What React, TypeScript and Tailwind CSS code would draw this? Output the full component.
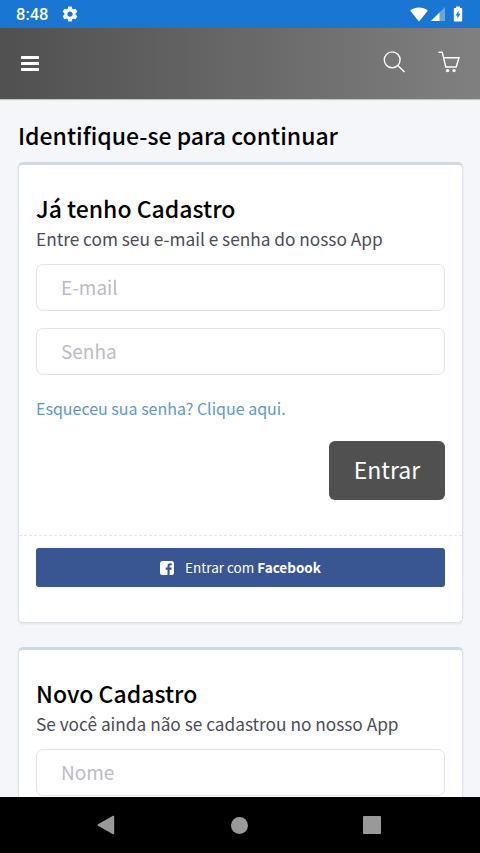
import React from 'react';

interface FieldProps {
  label: string;
  type?: string;
}

function Field({ label, type = 'text' }: FieldProps) {
  return (
    <input
      type={type}
      placeholder={label}
      className="block h-[47px] w-full rounded-[7px] border border-[#e2e3e8] bg-white px-[24px] pb-[3px] text-[19px] leading-[30px] text-[#4a4a58] placeholder:text-[#bbbcc6]"
    />
  );
}

interface PanelProps {
  title: string;
  description: string;
  children: React.ReactNode;
}

function Panel({ title, description, children }: PanelProps) {
  return (
    <section className="rounded-[5px] border border-t-[3px] border-[#dbe2ec] border-t-[#d0dae3] bg-white shadow-[0_1px_2px_rgba(190,200,215,0.4)]">
      <div className="px-[17px] pt-[27px]">
        <h2 className="mb-[1px] text-[23px] leading-[32px] font-medium text-black">{title}</h2>
        <p className="h-[39px] text-[17.25px] leading-[28px] whitespace-nowrap text-[#4b4b58]">{description}</p>
      </div>
      {children}
    </section>
  );
}

function StatusBar() {
  return (
    <div className="flex h-[28px] shrink-0 items-center bg-[#1976d2] pr-[17px] pl-[16px] text-white">
      <span className="pt-[1px] font-[Roboto] text-[16.5px] leading-[28px] font-medium">8:48</span>
      <svg className="ml-[13px] h-[18px] w-[18px]" viewBox="0 0 24 24" fill="currentColor">
        <path d="M19.43 12.98c.04-.32.07-.64.07-.98s-.03-.66-.07-.98l2.11-1.65c.19-.15.24-.42.12-.64l-2-3.46c-.12-.22-.39-.3-.61-.22l-2.49 1c-.52-.4-1.08-.73-1.69-.98l-.38-2.65A.49.49 0 0 0 14 2h-4c-.25 0-.46.18-.49.42l-.38 2.65c-.61.25-1.17.59-1.69.98l-2.49-1c-.23-.09-.49 0-.61.22l-2 3.46c-.13.22-.07.49.12.64l2.11 1.65c-.04.32-.07.65-.07.98s.03.66.07.98l-2.11 1.65c-.19.15-.24.42-.12.64l2 3.46c.12.22.39.3.61.22l2.49-1c.52.4 1.08.73 1.69.98l.38 2.65c.03.24.24.42.49.42h4c.25 0 .46-.18.49-.42l.38-2.65c.61-.25 1.17-.59 1.69-.98l2.49 1c.23.09.49 0 .61-.22l2-3.46c.12-.22.07-.49-.12-.64zM12 15.5a3.5 3.5 0 1 1 0-7 3.5 3.5 0 0 1 0 7z" />
      </svg>
      <div className="ml-auto flex items-center">
        <svg className="h-[15px] w-[18px]" viewBox="0 0 18 15" fill="currentColor">
          <path d="M9 14.6 0.2 3.8C2.6 1.7 5.7 0.6 9 0.6s6.4 1.1 8.8 3.2z" />
        </svg>
        <svg className="ml-[3px] h-[14px] w-[14px]" viewBox="0 0 14 14" fill="currentColor">
          <path d="M14 0v14H0z" opacity=".35" />
          <path d="M8.5 5.5v8.5H0z" />
        </svg>
        <svg className="ml-[8px] h-[16px] w-[10px]" viewBox="0 0 10 16">
          <path d="M3 0.5h4v1.5h1.5a.7.7 0 0 1 .7.7v12.1a.7.7 0 0 1-.7.7h-7a.7.7 0 0 1-.7-.7V2.7a.7.7 0 0 1 .7-.7H3z" fill="#fff" />
          <path d="M5.6 4.5v3.3h1.7L4.4 12.8V9.5H2.7z" fill="#1976d2" />
        </svg>
      </div>
    </div>
  );
}

function Header() {
  return (
    <header className="flex h-[71px] shrink-0 items-center bg-linear-to-r from-[#505050] to-[#808080] pr-[20px] pl-[21px] text-white shadow-[0_1px_1px_rgba(0,0,0,0.2)]">
      <button type="button" aria-label="Menu" className="flex w-[18px] flex-col gap-[3px]">
        <span className="h-[3px] rounded-[0.5px] bg-white" />
        <span className="h-[3px] rounded-[0.5px] bg-white" />
        <span className="h-[3px] rounded-[0.5px] bg-white" />
      </button>
      <button type="button" aria-label="Buscar" className="ml-auto pb-[3px]">
        <svg className="h-[22px] w-[22px]" viewBox="0 0 22 22" fill="none" stroke="currentColor" strokeWidth="1.4">
          <circle cx="9.2" cy="8.8" r="7.9" />
          <path d="M14.8 14.4 21.5 21.1" />
        </svg>
      </button>
      <button type="button" aria-label="Carrinho" className="ml-[33px] pb-[3px]">
        <svg className="h-[22px] w-[22px]" viewBox="0 0 22 22" fill="none" stroke="currentColor" strokeWidth="1.4">
          <path d="M0.5 1.2H4.2L7.8 16H18.2L21 6.8H5.6" />
          <circle cx="9.6" cy="19.6" r="1.7" fill="currentColor" stroke="none" />
          <circle cx="16" cy="19.6" r="1.7" fill="currentColor" stroke="none" />
        </svg>
      </button>
    </header>
  );
}

function NavigationBar() {
  return (
    <nav className="flex h-[56px] shrink-0 items-center justify-between bg-black pr-[99px] pl-[97px] text-[#999]">
      <svg className="h-[20px] w-[18px]" viewBox="0 0 18 20" fill="currentColor">
        <path d="M16 .8a.8.8 0 0 1 1.2.7v17a.8.8 0 0 1-1.2.7L1 10.7a.8.8 0 0 1 0-1.4z" />
      </svg>
      <span className="h-[17px] w-[17px] rounded-full bg-[#999]" />
      <span className="h-[18px] w-[18px] rounded-[1px] bg-[#999]" />
    </nav>
  );
}

export default function App() {
  return (
    <div className="flex h-[853px] w-[480px] flex-col overflow-hidden bg-[#f4f6fa] font-['Noto_Sans_CJK_SC',sans-serif]">
      <StatusBar />
      <Header />

      <main className="min-h-0 flex-1 overflow-hidden pt-[20px] pr-[17px] pl-[18px]">
        <h1 className="mb-[11px] text-[23px] leading-[32px] font-medium whitespace-nowrap text-black">
          Identifique-se para continuar
        </h1>

        <div className="flex flex-col gap-[24px]">
          <Panel title="Já tenho Cadastro" description="Entre com seu e-mail e senha do nosso App">
            <div className="flex flex-col px-[17px]">
              <div className="flex flex-col gap-[17px]">
                <Field label="E-mail" />
                <Field label="Senha" type="password" />
              </div>
              <a href="#" className="mt-[19px] text-[16px] leading-[28px] whitespace-nowrap text-[#5c9acb]">
                Esqueceu sua senha? Clique aqui.
              </a>
              <button
                type="button"
                className="mt-[19px] h-[59px] w-[116px] self-end rounded-[6px] bg-[#505050] pb-[4px] text-[23px] leading-[36px] text-white"
              >
                Entrar
              </button>
            </div>
            <div className="mt-[35px] border-t border-dashed border-[#e3e5e9] px-[17px] pt-[12px] pb-[35px]">
              <button
                type="button"
                className="flex h-[39px] w-full items-center justify-center rounded-[3px] bg-[#395693] text-[13.5px] leading-[22px] text-white"
              >
                <svg className="mr-[11px] h-[14px] w-[14px]" viewBox="0 0 14 14">
                  <rect width="14" height="14" rx="2.5" fill="#fff" />
                  <path d="M9.6 14V8.7h1.8l.3-2.1H9.6V5.4c0-.7.3-1.1 1.1-1.1h1.1V2.4c-.3 0-.9-.1-1.6-.1-1.7 0-2.7 1-2.7 2.8v1.5H5.7v2.1h1.8V14z" fill="#395693" />
                </svg>
                <span className="pb-[2px]">
                  Entrar com <strong className="font-bold">Facebook</strong>
                </span>
              </button>
            </div>
          </Panel>

          <Panel title="Novo Cadastro" description="Se você ainda não se cadastrou no nosso App">
            <div className="px-[17px] pb-[35px]">
              <Field label="Nome" />
            </div>
          </Panel>
        </div>
      </main>

      <NavigationBar />
    </div>
  );
}
